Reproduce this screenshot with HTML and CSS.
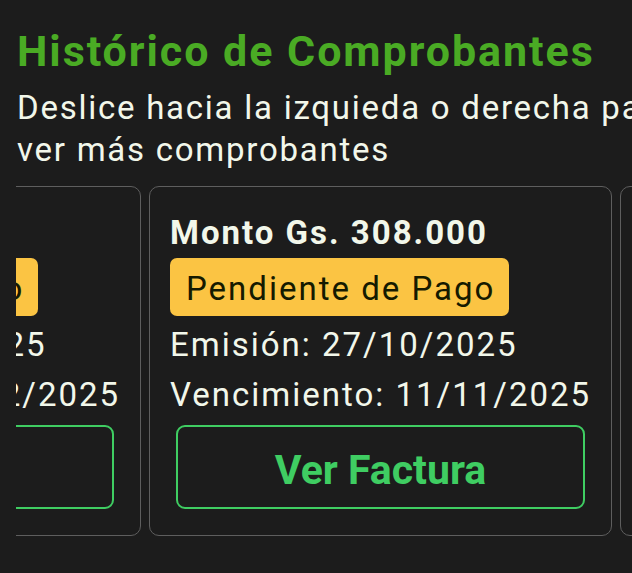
FILE: index.html
```html
<!DOCTYPE html>
<html lang="es">
<head>
  <meta charset="UTF-8" />
  <meta name="viewport" content="width=device-width, initial-scale=1.0"/>
  <title>Histórico de Comprobantes</title>
  <link rel="stylesheet" href="styles.css">
</head>
<body>

  <h1 class="titulo">Histórico de Comprobantes</h1>
  <p class="subtitulo">Deslice hacia la izquieda o derecha para ver más comprobantes</p>

  <div class="carrusel">
    <div class="pista">

      <div class="tarjeta">
        <div class="monto">Monto Gs. 308.000</div>
        <div class="estado">Pendiente de Pago</div>
        <div class="fecha emision">Emisión: 27/11/2025</div>
        <div class="fecha">Vencimiento: 12/12/2025</div>
        <button class="btn-factura">Ver Factura</button>
      </div>

      <div class="tarjeta">
        <div class="monto">Monto Gs. 308.000</div>
        <div class="estado">Pendiente de Pago</div>
        <div class="fecha emision">Emisión: 27/10/2025</div>
        <div class="fecha">Vencimiento: 11/11/2025</div>
        <button class="btn-factura">Ver Factura</button>
      </div>

      <div class="tarjeta">
        <div class="monto">Monto Gs. 308.000</div>
        <div class="estado">Pendiente de Pago</div>
        <div class="fecha emision">Emisión: 27/09/2025</div>
        <div class="fecha">Vencimiento: 11/10/2025</div>
        <button class="btn-factura">Ver Factura</button>
      </div>

    </div>
  </div>

</body>
</html>
```

FILE: styles.css
```css
html, body {
  margin: 0;
  overflow: hidden;
}
body {
  font-family: Roboto, "Noto Sans", Arial, sans-serif;
  background-color: #1c1c1c;
  color: #f2f7ea;
  width: 632px;
  height: 573px;
  letter-spacing: 2px;
}
.titulo {
  margin: 0;
  padding: 26px 0 0 17px;
  font-size: 43px;
  line-height: 50px;
  font-weight: bold;
  letter-spacing: 1.95px;
  color: #4aab24;
  white-space: nowrap;
}
.subtitulo {
  margin: 11px 0 0;
  padding-left: 17px;
  width: 700px;
  font-size: 33px;
  line-height: 42px;
  letter-spacing: 1.75px;
}
.carrusel {
  margin: 15px 0 0 16px;
  overflow: hidden;
}
.pista {
  display: flex;
  gap: 8px;
  margin-left: -338px;
}
.tarjeta {
  flex: 0 0 auto;
  display: flex;
  flex-direction: column;
  align-items: flex-start;
  box-sizing: border-box;
  width: 463px;
  height: 350px;
  padding: 26px 20px 0;
  border: 1px solid #5e5e5e;
  border-radius: 10px;
  font-size: 33px;
  white-space: nowrap;
}
.monto {
  line-height: 40px;
  font-weight: bold;
}
.estado {
  box-sizing: border-box;
  margin-top: 5px;
  padding: 4px 14px 0 16px;
  height: 58px;
  line-height: 54px;
  background: #fbc443;
  color: #151a00;
  border-radius: 7px;
}
.fecha {
  line-height: 50px;
}
.emision {
  margin-top: 4px;
}
.btn-factura {
  align-self: stretch;
  box-sizing: border-box;
  margin: 5px 6px 0;
  padding: 6px 0 0;
  height: 84px;
  background: transparent;
  border: 2px solid #3fcd62;
  border-radius: 9px;
  color: #3fcd62;
  font-family: inherit;
  font-size: 41px;
  font-weight: bold;
  letter-spacing: 0;
}
```
